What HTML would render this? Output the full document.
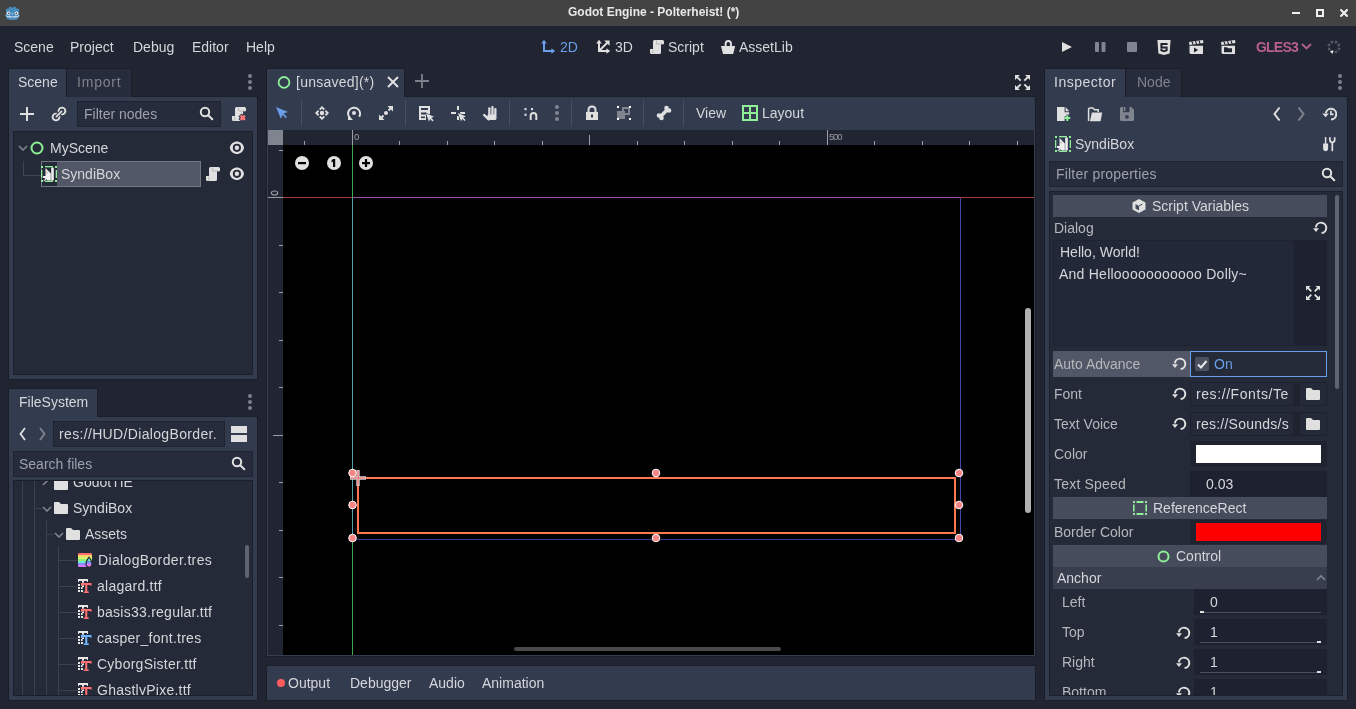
<!DOCTYPE html><html><head><meta charset="utf-8"><style>
html,body{margin:0;padding:0;width:1356px;height:709px;overflow:hidden;background:#202531}
#r{position:relative;width:1356px;height:709px;overflow:hidden}
#r div,#r svg{position:absolute}
.t{font-family:"Liberation Sans",sans-serif;line-height:20px;white-space:pre;will-change:transform}
</style></head><body><div id="r">
<div style="left:0px;top:0px;width:1356px;height:26px;background:#434343;"></div>
<div class="t" style="left:568px;top:2px;font-size:12px;color:#e8e8e8;font-weight:bold;">Godot Engine - Polterheist! (*)</div>
<svg style="left:5px;top:6px;" width="15" height="14" viewBox="0 0 15 14"><path d="M1 4.2 Q0.6 2.9 1.8 2.7 L3.6 2.4 L4.4 0.9 Q5 0.1 5.8 0.8 L7.5 1.8 L9.2 0.8 Q10 0.1 10.6 0.9 L11.4 2.4 L13.2 2.7 Q14.4 2.9 14 4.2 V10.5 Q14 14 7.5 14 Q1 14 1 10.5 Z" fill="#478cbf"/><circle cx="3.6" cy="7.2" r="1.7" fill="#fff"/><circle cx="11.4" cy="7.2" r="1.7" fill="#fff"/><circle cx="3.7" cy="7.3" r="0.9" fill="#414042"/><circle cx="11.3" cy="7.3" r="0.9" fill="#414042"/><circle cx="7.5" cy="7.7" r="0.8" fill="#a8cbe8"/><path d="M0.6 9.4 L3 10.9 L5 10 V11.4 L7.5 10.6 L10 11.4 V10 L12 10.9 L14.4 9.4" stroke="#e8f0f8" stroke-width="0.9" fill="none"/></svg>
<div style="left:1292px;top:12px;width:8px;height:2px;background:#f0f0f0;"></div>
<svg style="left:1316px;top:9px;" width="8" height="8" viewBox="0 0 8 8"><rect x="1" y="1" width="6" height="6" fill="none" stroke="#f0f0f0" stroke-width="2"/></svg>
<svg style="left:1340px;top:9px;" width="8" height="8" viewBox="0 0 8 8"><path d="M1.2 1.2 L6.8 6.8 M6.8 1.2 L1.2 6.8" stroke="#f0f0f0" stroke-width="2.2" stroke-linecap="square"/></svg>
<div style="left:0px;top:26px;width:1356px;height:683px;background:#202531;"></div>
<div class="t" style="left:14px;top:37px;font-size:14px;color:#d5d6d9;font-weight:normal;">Scene</div>
<div class="t" style="left:70px;top:37px;font-size:14px;color:#d5d6d9;font-weight:normal;">Project</div>
<div class="t" style="left:133px;top:37px;font-size:14px;color:#d5d6d9;font-weight:normal;">Debug</div>
<div class="t" style="left:192px;top:37px;font-size:14px;color:#d5d6d9;font-weight:normal;">Editor</div>
<div class="t" style="left:246px;top:37px;font-size:14px;color:#d5d6d9;font-weight:normal;">Help</div>
<div class="t" style="left:560px;top:37px;font-size:14px;color:#6a9ee8;font-weight:normal;">2D</div>
<div class="t" style="left:615px;top:37px;font-size:14px;color:#d5d6d9;font-weight:normal;">3D</div>
<div class="t" style="left:668px;top:37px;font-size:14px;color:#d5d6d9;font-weight:normal;">Script</div>
<div class="t" style="left:739px;top:37px;font-size:14px;color:#d5d6d9;font-weight:normal;">AssetLib</div>
<svg style="left:540px;top:39px;" width="16" height="16" viewBox="0 0 16 16"><path d="M1.2 4.6 L4 0.8 L6.8 4.6 Z M11.4 9.2 L15.2 12 L11.4 14.8 Z" fill="#6a9ee8"/><rect x="3" y="4" width="2" height="9" fill="#6a9ee8"/><rect x="3" y="11" width="9" height="2" fill="#6a9ee8"/></svg>
<svg style="left:595px;top:39px;" width="16" height="16" viewBox="0 0 16 16"><path d="M1.2 4.6 L4 0.8 L6.8 4.6 Z M11.4 9.2 L15.2 12 L11.4 14.8 Z M9.2 1.4 H14.6 V6.8 Z" fill="#e0e0e0"/><rect x="3" y="4" width="2" height="9" fill="#e0e0e0"/><rect x="3" y="11" width="9" height="2" fill="#e0e0e0"/><path d="M4 12 L12.5 3.5" stroke="#e0e0e0" stroke-width="2"/></svg>
<svg style="left:649px;top:39px;" width="16" height="16" viewBox="0 0 16 16"><path d="M5.5 1 H13.5 Q15 1 15 2.5 V5 H12 V13.5 Q12 15 10.5 15 H2.5 Q1 15 1 13.5 V10 H4 V2.5 Q4 1 5.5 1 Z" fill="#e0e0e0"/><path d="M7.6 1.5 V5.1 H14.5 M3.8 10.5 V14.5" stroke="#b4b4b4" stroke-width="0.9" fill="none"/></svg>
<svg style="left:720px;top:39px;" width="16" height="16" viewBox="0 0 16 16"><path d="M5.6 7.5 V5 Q5.6 2 8.3 2 Q11 2 11 5 V7.5" stroke="#e0e0e0" stroke-width="1.9" fill="none"/><path d="M1 7 H15.2 L13.2 15 H3 Z" fill="#e0e0e0"/></svg>
<svg style="left:1062px;top:42px;" width="10" height="10" viewBox="0 0 10 10"><path d="M0 0 L10 5 L0 10 Z" fill="#e0e0e0"/></svg>
<svg style="left:1095px;top:42px;" width="11" height="10" viewBox="0 0 11 10"><rect x="0" y="0" width="4" height="10" rx="1" fill="#808591"/><rect x="6.5" y="0" width="4" height="10" rx="1" fill="#808591"/></svg>
<svg style="left:1127px;top:42px;" width="10" height="10" viewBox="0 0 10 10"><rect x="0" y="0" width="10" height="10" rx="1" fill="#808591"/></svg>
<svg style="left:1157px;top:39px;" width="14" height="17" viewBox="0 0 14 17"><path d="M0.4 1 H13.6 L12.6 14.4 L7 16 L1.4 14.4 Z" fill="#e0e0e0"/><path d="M3.4 4 H10.6 V6 H5.5 V7.4 H10.6 V12 L7 13.2 L3.4 12 V9.8 H5.4 V10.8 L7 11.3 L8.6 10.8 V9.4 H3.4 Z" fill="#202531"/></svg>
<svg style="left:1188px;top:39px;" width="16" height="16" viewBox="0 0 16 16"><path d="M1 3 L15 1 L15.4 4 L1.4 6 Z" fill="#e0e0e0"/><path d="M4 2.6 L5 5.6 M7.5 2.1 L8.5 5.1 M11 1.6 L12 4.6" stroke="#202531" stroke-width="1.2"/><path d="M1.5 6.8 H15 V15 H2.5 L1.5 14 Z" fill="#e0e0e0"/><path d="M6 8.5 L10.2 11 L6 13.5 Z" fill="#202531"/></svg>
<svg style="left:1220px;top:39px;" width="16" height="16" viewBox="0 0 16 16"><path d="M1 3 L15 1 L15.4 4 L1.4 6 Z" fill="#e0e0e0"/><path d="M4 2.6 L5 5.6 M7.5 2.1 L8.5 5.1 M11 1.6 L12 4.6" stroke="#202531" stroke-width="1.2"/><path d="M1.5 6.8 H15 V15 H2.5 L1.5 14 Z" fill="#e0e0e0"/><path d="M4 8.3 H7 L8 9.3 H12 V13.3 H4 Z" fill="#202531"/></svg>
<div class="t" style="left:1256px;top:37px;font-size:14px;color:#b95f8c;font-weight:bold;letter-spacing:-0.8px">GLES3</div>
<svg style="left:1301px;top:43px;" width="11" height="7" viewBox="0 0 11 7"><path d="M1 1 L5.5 5.5 L10 1" stroke="#b5608c" stroke-width="1.8" fill="none"/></svg>
<svg style="left:1326px;top:39px;" width="16" height="16" viewBox="0 0 16 16"><polygon points="12.06,3.95 8.28,4.44 9.74,0.92" fill="#575c69"/><polygon points="13.74,8.00 10.72,5.68 14.24,4.23" fill="#575c69"/><polygon points="12.05,12.06 11.56,8.28 15.08,9.74" fill="#575c69"/><polygon points="8.00,13.74 10.32,10.72 11.77,14.24" fill="#575c69"/><polygon points="3.94,12.05 7.72,11.56 6.26,15.08" fill="#f0f0f0"/><polygon points="2.26,8.00 5.28,10.32 1.76,11.77" fill="#575c69"/><polygon points="3.95,3.94 4.44,7.72 0.92,6.26" fill="#575c69"/><polygon points="8.00,2.26 5.68,5.28 4.23,1.76" fill="#575c69"/></svg>
<div style="left:8px;top:68px;width:124px;height:29px;background:#1b1e28;"></div>
<div style="left:8px;top:96px;width:250px;height:284px;background:#1b1e28;"></div>
<div style="left:9px;top:97px;width:248px;height:282px;background:#333b4f;"></div>
<div style="left:9px;top:69px;width:57px;height:28px;background:#333b4f;"></div>
<div style="left:67px;top:69px;width:64px;height:28px;background:#262c3b;"></div>
<div class="t" style="left:18px;top:72px;font-size:14px;color:#d5d6d9;font-weight:normal;">Scene</div>
<div class="t" style="left:77px;top:72px;font-size:14px;color:#7f828b;font-weight:normal;letter-spacing:0.8px">Import</div>
<svg style="left:248px;top:73px;" width="4" height="18" viewBox="0 0 4 18"><circle cx="2" cy="3" r="2" fill="#7b8090"/><circle cx="2" cy="9" r="2" fill="#7b8090"/><circle cx="2" cy="15" r="2" fill="#7b8090"/></svg>
<svg style="left:20px;top:107px;" width="14" height="14" viewBox="0 0 14 14"><path d="M7 0 V14 M0 7 H14" stroke="#e0e0e0" stroke-width="2"/></svg>
<svg style="left:51px;top:106px;" width="16" height="16" viewBox="0 0 16 16"><circle cx="11" cy="5" r="3.4" stroke="#e0e0e0" stroke-width="1.9" fill="none"/><circle cx="5" cy="11" r="3.4" stroke="#e0e0e0" stroke-width="1.9" fill="none"/><path d="M5.2 10.8 L10.8 5.2" stroke="#333b4f" stroke-width="3.6"/><path d="M5.4 10.6 L10.6 5.4" stroke="#e0e0e0" stroke-width="1.7" stroke-linecap="round"/></svg>
<div style="left:77px;top:101px;width:144px;height:26px;background:#262c3b;box-shadow: inset 0 0 0 1px #1f2431"></div>
<div class="t" style="left:84px;top:104px;font-size:14px;color:#9da1ab;font-weight:normal;">Filter nodes</div>
<svg style="left:199px;top:106px;" width="16" height="16" viewBox="0 0 16 16"><circle cx="6" cy="6" r="4.2" stroke="#e0e0e0" stroke-width="2" fill="none"/><path d="M9.2 9.2 L13.3 13.3" stroke="#e0e0e0" stroke-width="2" stroke-linecap="round"/></svg>
<svg style="left:231px;top:106px;" width="16" height="16" viewBox="0 0 16 16"><path d="M5.5 1 H13.5 Q15 1 15 2.5 V5 H12 V13.5 Q12 15 10.5 15 H2.5 Q1 15 1 13.5 V10 H4 V2.5 Q4 1 5.5 1 Z" fill="#e0e0e0"/><path d="M7.6 1.5 V5.1 H14.5 M3.8 10.5 V14.5" stroke="#b4b4b4" stroke-width="0.9" fill="none"/><path d="M9 9 L14.5 14.5 M14.5 9 L9 14.5" stroke="#333b4f" stroke-width="4.5"/><path d="M9.6 9.6 L13.9 13.9 M13.9 9.6 L9.6 13.9" stroke="#ff7a7a" stroke-width="2.2"/></svg>
<div style="left:13px;top:131px;width:240px;height:244px;background:#252a39;box-shadow: inset 0 0 0 1px #1c202b"></div>
<svg style="left:18px;top:145px;" width="10" height="6" viewBox="0 0 10 6"><path d="M1 1 L5 5 L9 1" stroke="#80848f" stroke-width="1.6" fill="none"/></svg>
<svg style="left:30px;top:141px;" width="14" height="14" viewBox="0 0 14 14"><circle cx="7" cy="7" r="5.5" stroke="#8eef97" stroke-width="2" fill="none"/></svg>
<div class="t" style="left:50px;top:138px;font-size:14px;color:#d5d6d9;font-weight:normal;">MyScene</div>
<div style="left:23px;top:161px;width:1px;height:15px;background:#3f4555;"></div>
<div style="left:23px;top:175px;width:18px;height:1px;background:#3f4555;"></div>
<div style="left:41px;top:161px;width:160px;height:26px;background:#515766;box-shadow: inset 0 0 0 1px #727784"></div>
<div style="left:42px;top:162px;width:15px;height:24px;background:#252a39;"></div>
<svg style="left:40px;top:165px;" width="18" height="18" viewBox="0 0 18 18"><rect x="1" y="1" width="2" height="2" fill="#8eef97"/><rect x="15" y="1" width="2" height="2" fill="#8eef97"/><rect x="1" y="15" width="2" height="2" fill="#8eef97"/><rect x="15" y="15" width="2" height="2" fill="#8eef97"/><rect x="5" y="1" width="8" height="1.3" fill="#8eef97"/><rect x="5" y="15.7" width="8" height="1.3" fill="#8eef97"/><rect x="1" y="5" width="1.3" height="8" fill="#8eef97"/><rect x="15.7" y="5" width="1.3" height="8" fill="#8eef97"/><path d="M11.2 2.5 H13.8 V15.5 H11.2 Z" fill="#f0f0f0"/><path d="M5.5 3 L10.8 8.5 V15.5 H7.5 L6.5 14.2 L4.2 16.2 L3.5 15.5 L5.6 13.5 L3 12.8 V11 H5.5 Z" fill="#f0f0f0"/><path d="M6.5 6 L8.2 8 L6.5 9 Z" fill="#b8b8b8"/></svg>
<div class="t" style="left:61px;top:164px;font-size:14px;color:#d5d6d9;font-weight:normal;">SyndiBox</div>
<svg style="left:205px;top:166px;" width="16" height="16" viewBox="0 0 16 16"><path d="M5.5 1 H13.5 Q15 1 15 2.5 V5 H12 V13.5 Q12 15 10.5 15 H2.5 Q1 15 1 13.5 V10 H4 V2.5 Q4 1 5.5 1 Z" fill="#e0e0e0"/><path d="M7.6 1.5 V5.1 H14.5 M3.8 10.5 V14.5" stroke="#b4b4b4" stroke-width="0.9" fill="none"/></svg>
<svg style="left:229px;top:141px;" width="16" height="14" viewBox="0 0 16 14"><path d="M0.8 6.8 C2.2 -1.5 13.6 -1.5 15 6.8 C13.6 15.1 2.2 15.1 0.8 6.8 Z" fill="#e0e0e0"/><circle cx="7.9" cy="6.8" r="4.1" fill="#252a39"/><circle cx="7.9" cy="6.8" r="2.2" fill="#e0e0e0"/></svg>
<svg style="left:229px;top:167px;" width="16" height="14" viewBox="0 0 16 14"><path d="M0.8 6.8 C2.2 -1.5 13.6 -1.5 15 6.8 C13.6 15.1 2.2 15.1 0.8 6.8 Z" fill="#e0e0e0"/><circle cx="7.9" cy="6.8" r="4.1" fill="#252a39"/><circle cx="7.9" cy="6.8" r="2.2" fill="#e0e0e0"/></svg>
<div style="left:8px;top:388px;width:90px;height:29px;background:#1b1e28;"></div>
<div style="left:8px;top:416px;width:250px;height:285px;background:#1b1e28;"></div>
<div style="left:9px;top:417px;width:248px;height:283px;background:#333b4f;"></div>
<div style="left:9px;top:389px;width:88px;height:28px;background:#333b4f;"></div>
<div class="t" style="left:19px;top:392px;font-size:14px;color:#d5d6d9;font-weight:normal;">FileSystem</div>
<svg style="left:248px;top:393px;" width="4" height="18" viewBox="0 0 4 18"><circle cx="2" cy="3" r="2" fill="#7b8090"/><circle cx="2" cy="9" r="2" fill="#7b8090"/><circle cx="2" cy="15" r="2" fill="#7b8090"/></svg>
<svg style="left:19px;top:427px;" width="7" height="14" viewBox="0 0 7 14"><path d="M6 1 L1.5 7 L6 13" stroke="#e0e0e0" stroke-width="1.8" fill="none"/></svg>
<svg style="left:39px;top:427px;" width="7" height="14" viewBox="0 0 7 14"><path d="M1 1 L5.5 7 L1 13" stroke="#80848f" stroke-width="1.8" fill="none"/></svg>
<div style="left:53px;top:421px;width:172px;height:26px;background:#262c3b;box-shadow: inset 0 0 0 1px #1f2431"></div>
<div class="t" style="left:59px;top:424px;font-size:14px;color:#d5d6d9;font-weight:normal;letter-spacing:0.34px">res://HUD/DialogBorder.</div>
<div style="left:231px;top:426px;width:16px;height:7px;background:#e0e0e0;"></div>
<div style="left:231px;top:435px;width:16px;height:7px;background:#e0e0e0;"></div>
<div style="left:13px;top:451px;width:240px;height:26px;background:#262c3b;box-shadow: inset 0 0 0 1px #1f2431"></div>
<div class="t" style="left:19px;top:454px;font-size:14px;color:#9da1ab;font-weight:normal;">Search files</div>
<svg style="left:231px;top:456px;" width="16" height="16" viewBox="0 0 16 16"><circle cx="6" cy="6" r="4.2" stroke="#e0e0e0" stroke-width="2" fill="none"/><path d="M9.2 9.2 L13.3 13.3" stroke="#e0e0e0" stroke-width="2" stroke-linecap="round"/></svg>
<div style="left:13px;top:480px;width:240px;height:216px;background:#252a39;box-shadow: inset 0 0 0 1px #1c202b"></div>
<div style="left:14px;top:481px;width:238px;height:214px;overflow:hidden">
<div style="left:8px;top:0px;width:1px;height:214px;background:#3a4050;"></div>
<div style="left:20px;top:0px;width:1px;height:214px;background:#3a4050;"></div>
<div style="left:32px;top:39px;width:1px;height:175px;background:#3a4050;"></div>
<div style="left:44px;top:65px;width:1px;height:149px;background:#3a4050;"></div>
<div style="left:20px;top:27px;width:8px;height:1px;background:#3a4050;"></div>
<div style="left:32px;top:53px;width:8px;height:1px;background:#3a4050;"></div>
<div style="left:44px;top:79px;width:20px;height:1px;background:#3a4050;"></div>
<div style="left:44px;top:105px;width:20px;height:1px;background:#3a4050;"></div>
<div style="left:44px;top:131px;width:20px;height:1px;background:#3a4050;"></div>
<div style="left:44px;top:157px;width:20px;height:1px;background:#3a4050;"></div>
<div style="left:44px;top:183px;width:20px;height:1px;background:#3a4050;"></div>
<div style="left:44px;top:209px;width:20px;height:1px;background:#3a4050;"></div>
<svg style="left:40px;top:-3px;" width="14" height="12" viewBox="0 0 14 12"><path d="M0 1 Q0 0 1 0 H5 L7 2 H13 Q14 2 14 3 V11 Q14 12 13 12 H1 Q0 12 0 11 Z" fill="#e0e0e0"/></svg>
<svg style="left:28px;top:-3px;" width="8" height="8" viewBox="0 0 8 8"><path d="M1 7 L6 2" stroke="#80848f" stroke-width="1.6"/></svg>
<div class="t" style="left:59px;top:-9px;font-size:14px;color:#d5d6d9;font-weight:normal;">GodotTIE</div>
<svg style="left:40px;top:21px;" width="14" height="12" viewBox="0 0 14 12"><path d="M0 1 Q0 0 1 0 H5 L7 2 H13 Q14 2 14 3 V11 Q14 12 13 12 H1 Q0 12 0 11 Z" fill="#e0e0e0"/></svg>
<svg style="left:28px;top:25px;" width="10" height="6" viewBox="0 0 10 6"><path d="M1 1 L5 5 L9 1" stroke="#80848f" stroke-width="1.6" fill="none"/></svg>
<div class="t" style="left:59px;top:17px;font-size:14px;color:#d5d6d9;font-weight:normal;">SyndiBox</div>
<svg style="left:52px;top:47px;" width="14" height="12" viewBox="0 0 14 12"><path d="M0 1 Q0 0 1 0 H5 L7 2 H13 Q14 2 14 3 V11 Q14 12 13 12 H1 Q0 12 0 11 Z" fill="#e0e0e0"/></svg>
<svg style="left:40px;top:51px;" width="10" height="6" viewBox="0 0 10 6"><path d="M1 1 L5 5 L9 1" stroke="#80848f" stroke-width="1.6" fill="none"/></svg>
<div class="t" style="left:71px;top:43px;font-size:14px;color:#d5d6d9;font-weight:normal;">Assets</div>
<svg style="left:64px;top:72px;" width="14" height="14" viewBox="0 0 14 14"><clipPath id="rc"><rect x="0" y="0" width="14" height="14" rx="1.2"/></clipPath><g clip-path="url(#rc)"><rect x="0" y="0" width="14" height="2" fill="#ff6e6e"/><rect x="0" y="2" width="14" height="2" fill="#ffd36e"/><rect x="0" y="4" width="14" height="2" fill="#d4f56e"/><rect x="0" y="6" width="14" height="2" fill="#8ef06e"/><rect x="0" y="8" width="14" height="2" fill="#6ee8d0"/><rect x="0" y="10" width="14" height="2" fill="#8a8cff"/><rect x="0" y="12" width="14" height="2" fill="#d67aff"/></g><path d="M11 3.2 Q14.6 8 14.6 10.4 Q14.6 14.6 11 14.6 Q7.4 14.6 7.4 10.4 Q7.4 8 11 3.2 Z" fill="#202531"/><clipPath id="dc"><path d="M11 5 Q13.4 8.6 13.4 10.5 Q13.4 13.4 11 13.4 Q8.6 13.4 8.6 10.5 Q8.6 8.6 11 5 Z"/></clipPath><g clip-path="url(#dc)"><rect x="8" y="4" width="6" height="4.5" fill="#6ee8d0"/><rect x="8" y="8.5" width="6" height="2.5" fill="#8a8cff"/><rect x="8" y="11" width="6" height="2.5" fill="#d67aff"/><rect x="8" y="12.3" width="6" height="2" fill="#ff78b8"/></g></svg>
<div class="t" style="left:84px;top:69px;font-size:14px;color:#d5d6d9;font-weight:normal;letter-spacing:0.35px">DialogBorder.tres</div>
<svg style="left:64px;top:98px;" width="14" height="14" viewBox="0 0 14 14"><path d="M0 0 H10 V3 H9 V2 H6 V8 H4 V2 H1 V3 H0 Z" fill="#e8e8e8"/><rect x="0" y="5" width="2" height="2" fill="#e8e8e8"/><rect x="0" y="8" width="2" height="2" fill="#e8e8e8"/><rect x="0" y="11" width="2" height="2" fill="#e8e8e8"/><rect x="3" y="8" width="1.6" height="2" fill="#e8e8e8"/><rect x="3" y="11" width="2" height="2" fill="#e8e8e8"/><path d="M3 4 H13.5 V7 H12.5 V6 H9.3 V12.6 H10.8 V14 H5.7 V12.6 H7.2 V6 H4 V7 H3 Z" fill="#ff7070" stroke="#202531" stroke-width="0.6" paint-order="stroke"/></svg>
<div class="t" style="left:83px;top:95px;font-size:14px;color:#d5d6d9;font-weight:normal;letter-spacing:0.25px">alagard.ttf</div>
<svg style="left:64px;top:124px;" width="14" height="14" viewBox="0 0 14 14"><path d="M0 0 H10 V3 H9 V2 H6 V8 H4 V2 H1 V3 H0 Z" fill="#e8e8e8"/><rect x="0" y="5" width="2" height="2" fill="#e8e8e8"/><rect x="0" y="8" width="2" height="2" fill="#e8e8e8"/><rect x="0" y="11" width="2" height="2" fill="#e8e8e8"/><rect x="3" y="8" width="1.6" height="2" fill="#e8e8e8"/><rect x="3" y="11" width="2" height="2" fill="#e8e8e8"/><path d="M3 4 H13.5 V7 H12.5 V6 H9.3 V12.6 H10.8 V14 H5.7 V12.6 H7.2 V6 H4 V7 H3 Z" fill="#ff7070" stroke="#202531" stroke-width="0.6" paint-order="stroke"/></svg>
<div class="t" style="left:83px;top:121px;font-size:14px;color:#d5d6d9;font-weight:normal;letter-spacing:0.25px">basis33.regular.ttf</div>
<svg style="left:64px;top:150px;" width="14" height="14" viewBox="0 0 14 14"><path d="M0 0 H10 V3 H9 V2 H6 V8 H4 V2 H1 V3 H0 Z" fill="#e8e8e8"/><rect x="0" y="5" width="2" height="2" fill="#e8e8e8"/><rect x="0" y="8" width="2" height="2" fill="#e8e8e8"/><rect x="0" y="11" width="2" height="2" fill="#e8e8e8"/><rect x="3" y="8" width="1.6" height="2" fill="#e8e8e8"/><rect x="3" y="11" width="2" height="2" fill="#e8e8e8"/><path d="M3 4 H13.5 V7 H12.5 V6 H9.3 V12.6 H10.8 V14 H5.7 V12.6 H7.2 V6 H4 V7 H3 Z" fill="#6fb6ff" stroke="#202531" stroke-width="0.6" paint-order="stroke"/></svg>
<div class="t" style="left:83px;top:147px;font-size:14px;color:#d5d6d9;font-weight:normal;letter-spacing:0.25px">casper_font.tres</div>
<svg style="left:64px;top:176px;" width="14" height="14" viewBox="0 0 14 14"><path d="M0 0 H10 V3 H9 V2 H6 V8 H4 V2 H1 V3 H0 Z" fill="#e8e8e8"/><rect x="0" y="5" width="2" height="2" fill="#e8e8e8"/><rect x="0" y="8" width="2" height="2" fill="#e8e8e8"/><rect x="0" y="11" width="2" height="2" fill="#e8e8e8"/><rect x="3" y="8" width="1.6" height="2" fill="#e8e8e8"/><rect x="3" y="11" width="2" height="2" fill="#e8e8e8"/><path d="M3 4 H13.5 V7 H12.5 V6 H9.3 V12.6 H10.8 V14 H5.7 V12.6 H7.2 V6 H4 V7 H3 Z" fill="#ff7070" stroke="#202531" stroke-width="0.6" paint-order="stroke"/></svg>
<div class="t" style="left:83px;top:173px;font-size:14px;color:#d5d6d9;font-weight:normal;letter-spacing:0.25px">CyborgSister.ttf</div>
<svg style="left:64px;top:202px;" width="14" height="14" viewBox="0 0 14 14"><path d="M0 0 H10 V3 H9 V2 H6 V8 H4 V2 H1 V3 H0 Z" fill="#e8e8e8"/><rect x="0" y="5" width="2" height="2" fill="#e8e8e8"/><rect x="0" y="8" width="2" height="2" fill="#e8e8e8"/><rect x="0" y="11" width="2" height="2" fill="#e8e8e8"/><rect x="3" y="8" width="1.6" height="2" fill="#e8e8e8"/><rect x="3" y="11" width="2" height="2" fill="#e8e8e8"/><path d="M3 4 H13.5 V7 H12.5 V6 H9.3 V12.6 H10.8 V14 H5.7 V12.6 H7.2 V6 H4 V7 H3 Z" fill="#ff7070" stroke="#202531" stroke-width="0.6" paint-order="stroke"/></svg>
<div class="t" style="left:83px;top:199px;font-size:14px;color:#d5d6d9;font-weight:normal;letter-spacing:0.25px">GhastlyPixe.ttf</div>
</div>
<div style="left:245px;top:545px;width:4px;height:33px;background:#5f6472;border-radius:2px"></div>
<div style="left:266px;top:68px;width:139px;height:29px;background:#1b1e28;"></div>
<div style="left:266px;top:96px;width:770px;height:561px;background:#1b1e28;"></div>
<div style="left:267px;top:69px;width:137px;height:28px;background:#333b4f;"></div>
<svg style="left:277px;top:75px;" width="14" height="14" viewBox="0 0 14 14"><circle cx="7" cy="7.4" r="5.4" stroke="#8eef97" stroke-width="1.8" fill="none"/></svg>
<div class="t" style="left:296px;top:72px;font-size:14px;color:#d5d6d9;font-weight:normal;letter-spacing:0.25px">[unsaved](*)</div>
<svg style="left:387px;top:76px;" width="12" height="12" viewBox="0 0 12 12"><path d="M1 1 L11 11 M11 1 L1 11" stroke="#e0e0e0" stroke-width="2"/></svg>
<svg style="left:415px;top:74px;" width="14" height="14" viewBox="0 0 14 14"><path d="M7 0 V14 M0 7 H14" stroke="#7d808a" stroke-width="1.8"/></svg>
<svg style="left:1014.5px;top:74.5px;" width="15" height="15" viewBox="0 0 14 14"><path d="M0 0 H4.6 L0 4.6 Z M14 0 V4.6 L9.4 0 Z M0 14 V9.4 L4.6 14 Z M14 14 H9.4 L14 9.4 Z" fill="#e0e0e0"/><path d="M1.5 1.5 L5.3 5.3 M12.5 1.5 L8.7 5.3 M1.5 12.5 L5.3 8.7 M12.5 12.5 L8.7 8.7" stroke="#e0e0e0" stroke-width="1.8"/></svg>
<div style="left:267px;top:97px;width:768px;height:33px;background:#333b4f;"></div>
<div style="left:301px;top:100px;width:1px;height:26px;background:#474e62;"></div>
<div style="left:405px;top:100px;width:1px;height:26px;background:#474e62;"></div>
<div style="left:509px;top:100px;width:1px;height:26px;background:#474e62;"></div>
<div style="left:571px;top:100px;width:1px;height:26px;background:#474e62;"></div>
<div style="left:643px;top:100px;width:1px;height:26px;background:#474e62;"></div>
<div style="left:683px;top:100px;width:1px;height:26px;background:#474e62;"></div>
<div class="t" style="left:696px;top:103px;font-size:14px;color:#d5d6d9;font-weight:normal;">View</div>
<div class="t" style="left:762px;top:103px;font-size:14px;color:#d5d6d9;font-weight:normal;">Layout</div>
<div style="left:267px;top:130px;width:768px;height:526px;background:#353d50;"></div>
<div style="left:268px;top:130px;width:766px;height:525px;background:#202531;"></div>
<div style="left:268px;top:130px;width:15px;height:15px;background:#80848f;"></div>
<div style="left:283px;top:145px;width:751px;height:510px;background:#000;"></div>
<div style="left:266px;top:665px;width:770px;height:36px;background:#1b1e28;"></div>
<div style="left:267px;top:666px;width:768px;height:34px;background:#333b4f;"></div>
<svg style="left:277px;top:679px;" width="8" height="8" viewBox="0 0 8 8"><circle cx="4" cy="4" r="4" fill="#ff5d5d"/></svg>
<div class="t" style="left:288px;top:673px;font-size:14px;color:#d5d6d9;font-weight:normal;">Output</div>
<div class="t" style="left:350px;top:673px;font-size:14px;color:#d5d6d9;font-weight:normal;">Debugger</div>
<div class="t" style="left:429px;top:673px;font-size:14px;color:#d5d6d9;font-weight:normal;">Audio</div>
<div class="t" style="left:482px;top:673px;font-size:14px;color:#d5d6d9;font-weight:normal;">Animation</div>
<div style="left:1044px;top:68px;width:138px;height:29px;background:#1b1e28;"></div>
<div style="left:1044px;top:96px;width:304px;height:605px;background:#1b1e28;"></div>
<div style="left:1045px;top:97px;width:302px;height:603px;background:#333b4f;"></div>
<div style="left:1045px;top:69px;width:80px;height:28px;background:#333b4f;"></div>
<div style="left:1126px;top:69px;width:55px;height:28px;background:#262c3b;"></div>
<div class="t" style="left:1054px;top:72px;font-size:14px;color:#d5d6d9;font-weight:normal;letter-spacing:0.5px">Inspector</div>
<div class="t" style="left:1137px;top:72px;font-size:14px;color:#7f828b;font-weight:normal;">Node</div>
<svg style="left:1338px;top:73px;" width="4" height="18" viewBox="0 0 4 18"><circle cx="2" cy="3" r="2" fill="#7b8090"/><circle cx="2" cy="9" r="2" fill="#7b8090"/><circle cx="2" cy="15" r="2" fill="#7b8090"/></svg>
<div class="t" style="left:1075px;top:134px;font-size:14px;color:#d5d6d9;font-weight:normal;">SyndiBox</div>
<div style="left:1049px;top:161px;width:294px;height:26px;background:#262c3b;box-shadow: inset 0 0 0 1px #1f2431"></div>
<div class="t" style="left:1056px;top:164px;font-size:14px;color:#9da1ab;font-weight:normal;letter-spacing:0.2px">Filter properties</div>
<div style="left:1049px;top:191px;width:294px;height:505px;background:#252a39;box-shadow: inset 0 0 0 1px #1c202b"></div>
<svg style="left:274px;top:105px;" width="16" height="16" viewBox="0 0 16 16"><path d="M2 2 L14 7 L9.5 8.5 L13 12 L11.8 13.2 L8.3 9.7 L7 14 Z" fill="#6a9ee8"/></svg>
<svg style="left:314px;top:105px;" width="16" height="16" viewBox="0 0 16 16"><circle cx="8" cy="8" r="2.2" fill="#e0e0e0"/><path d="M8 1 L11 4 L9.6 5.2 L8 3.6 L6.4 5.2 L5 4 Z M8 15 L5 12 L6.4 10.8 L8 12.4 L9.6 10.8 L11 12 Z M1 8 L4 5 L5.2 6.4 L3.6 8 L5.2 9.6 L4 11 Z M15 8 L12 11 L10.8 9.6 L12.4 8 L10.8 6.4 L12 5 Z" fill="#e0e0e0"/></svg>
<svg style="left:346px;top:105px;" width="16" height="16" viewBox="0 0 16 16"><circle cx="8" cy="8" r="2" fill="#e0e0e0"/><path d="M4.2 13.2 A6 6 0 1 1 13.2 11.8" stroke="#e0e0e0" stroke-width="2" fill="none"/><path d="M2 10 L7 15 L2 15 Z" fill="#e0e0e0"/></svg>
<svg style="left:378px;top:105px;" width="16" height="16" viewBox="0 0 16 16"><circle cx="8" cy="8" r="2" fill="#e0e0e0"/><path d="M1 15 V9.5 L6.5 15 Z M15 1 V6.5 L9.5 1 Z" fill="#e0e0e0"/><path d="M3 13 L5.5 10.5 M13 3 L10.5 5.5" stroke="#e0e0e0" stroke-width="2"/></svg>
<svg style="left:418px;top:105px;" width="17" height="17" viewBox="0 0 17 17"><path d="M1 1 H12 V9 H8 V15 H1 Z" fill="#e0e0e0"/><rect x="3" y="3" width="7" height="2" fill="#333b4f"/><rect x="3" y="7.5" width="5" height="2" fill="#333b4f"/><rect x="3" y="11.5" width="4" height="1.6" fill="#333b4f"/><path d="M8 8.3 L16 11.8 L13.2 12.9 L15.6 15.3 L14.5 16.4 L12.1 14.0 L11 16.8 Z" fill="#e0e0e0" stroke="#333b4f" stroke-width="1.1" paint-order="stroke"/></svg>
<svg style="left:450px;top:105px;" width="17" height="17" viewBox="0 0 17 17"><rect x="7" y="1" width="2" height="4" fill="#e0e0e0"/><rect x="1" y="7" width="5" height="2" fill="#e0e0e0"/><rect x="10" y="7" width="5" height="2" fill="#e0e0e0"/><rect x="7" y="11" width="2" height="4" fill="#e0e0e0"/><path d="M8 8 L16 11.5 L13.2 12.6 L15.6 15 L14.5 16.1 L12.1 13.7 L11 16.5 Z" fill="#e0e0e0" stroke="#333b4f" stroke-width="1.1" paint-order="stroke"/></svg>
<svg style="left:482px;top:105px;" width="16" height="16" viewBox="0 0 16 16"><rect x="6.2" y="2.2" width="2.3" height="9" rx="1.1" fill="#e0e0e0"/><rect x="9.3" y="1" width="2.3" height="10" rx="1.1" fill="#e0e0e0"/><rect x="12.2" y="3" width="2.3" height="8" rx="1.1" fill="#e0e0e0"/><rect x="5.2" y="9.5" width="9.3" height="5.5" rx="1.6" fill="#e0e0e0"/><path d="M2.2 10 L6.6 14.3" stroke="#e0e0e0" stroke-width="2.4" stroke-linecap="round"/></svg>
<svg style="left:523px;top:105px;" width="16" height="16" viewBox="0 0 16 16"><rect x="1.5" y="3" width="2" height="2.2" fill="#e0e0e0"/><rect x="8" y="3" width="2" height="2.2" fill="#e0e0e0"/><rect x="1.5" y="8.7" width="2" height="2.2" fill="#e0e0e0"/><path d="M6.7 15 V10.7 Q6.7 6.9 10.5 6.9 Q14.3 6.9 14.3 10.7 V15 H12.3 V10.7 Q12.3 8.9 10.5 8.9 Q8.7 8.9 8.7 10.7 V15 Z" fill="#e0e0e0"/></svg>
<svg style="left:553px;top:104px;" width="8" height="18" viewBox="0 0 8 18"><circle cx="4" cy="3" r="2" fill="#80848f"/><circle cx="4" cy="9" r="2" fill="#80848f"/><circle cx="4" cy="15" r="2" fill="#80848f"/></svg>
<svg style="left:584px;top:105px;" width="16" height="16" viewBox="0 0 16 16"><path d="M4.5 7 V5 Q4.5 1.5 8 1.5 Q11.5 1.5 11.5 5 V7" stroke="#e0e0e0" stroke-width="2" fill="none"/><rect x="2" y="7" width="12" height="8" fill="#e0e0e0"/><rect x="7" y="9.5" width="2" height="3" fill="#333b4f"/></svg>
<svg style="left:616px;top:106px;" width="16" height="16" viewBox="0 0 16 16"><rect x="1" y="5" width="8" height="8" fill="#80848f"/><path d="M6 1 H14 V9 H9 V7 H12 V3 H8 V5 H6 Z" fill="#80848f"/><rect x="1" y="0" width="2" height="2" fill="#fff"/><rect x="13" y="0" width="2" height="2" fill="#fff"/><rect x="1" y="12" width="2" height="2" fill="#fff"/><rect x="13" y="12" width="2" height="2" fill="#fff"/></svg>
<svg style="left:656px;top:105px;" width="16" height="16" viewBox="0 0 16 16"><path d="M4.5 11.5 L11.5 4.5" stroke="#e0e0e0" stroke-width="3.5"/><circle cx="3" cy="10.5" r="2.3" fill="#e0e0e0"/><circle cx="5.5" cy="13" r="2.3" fill="#e0e0e0"/><circle cx="10.5" cy="3" r="2.3" fill="#e0e0e0"/><circle cx="13" cy="5.5" r="2.3" fill="#e0e0e0"/></svg>
<svg style="left:742px;top:105px;" width="16" height="16" viewBox="0 0 16 16"><rect x="1" y="1" width="14" height="14" fill="none" stroke="#8eef97" stroke-width="2"/><path d="M8 1 V15 M1 8 H15" stroke="#8eef97" stroke-width="2"/></svg>
<div style="left:304px;top:141px;width:1px;height:4px;background:#9a9ea8;"></div>
<div style="left:352px;top:130px;width:1px;height:15px;background:#9a9ea8;"></div>
<div style="left:399px;top:141px;width:1px;height:4px;background:#9a9ea8;"></div>
<div style="left:447px;top:141px;width:1px;height:4px;background:#9a9ea8;"></div>
<div style="left:494px;top:141px;width:1px;height:4px;background:#9a9ea8;"></div>
<div style="left:542px;top:141px;width:1px;height:4px;background:#9a9ea8;"></div>
<div style="left:589px;top:135px;width:1px;height:10px;background:#9a9ea8;"></div>
<div style="left:637px;top:141px;width:1px;height:4px;background:#9a9ea8;"></div>
<div style="left:684px;top:141px;width:1px;height:4px;background:#9a9ea8;"></div>
<div style="left:732px;top:141px;width:1px;height:4px;background:#9a9ea8;"></div>
<div style="left:779px;top:141px;width:1px;height:4px;background:#9a9ea8;"></div>
<div style="left:827px;top:130px;width:1px;height:15px;background:#9a9ea8;"></div>
<div style="left:874px;top:141px;width:1px;height:4px;background:#9a9ea8;"></div>
<div style="left:922px;top:141px;width:1px;height:4px;background:#9a9ea8;"></div>
<div style="left:969px;top:141px;width:1px;height:4px;background:#9a9ea8;"></div>
<div style="left:1017px;top:141px;width:1px;height:4px;background:#9a9ea8;"></div>
<div class="t" style="left:354px;top:127px;font-size:9.5px;color:#9a9ea8;font-weight:normal;letter-spacing:-1.2px">0</div>
<div class="t" style="left:829px;top:127px;font-size:9.5px;color:#9a9ea8;font-weight:normal;letter-spacing:-1.2px">500</div>
<div style="left:279px;top:150px;width:4px;height:1px;background:#9a9ea8;"></div>
<div style="left:268px;top:197px;width:15px;height:1px;background:#9a9ea8;"></div>
<div style="left:279px;top:245px;width:4px;height:1px;background:#9a9ea8;"></div>
<div style="left:279px;top:292px;width:4px;height:1px;background:#9a9ea8;"></div>
<div style="left:279px;top:340px;width:4px;height:1px;background:#9a9ea8;"></div>
<div style="left:279px;top:387px;width:4px;height:1px;background:#9a9ea8;"></div>
<div style="left:273px;top:435px;width:10px;height:1px;background:#9a9ea8;"></div>
<div style="left:279px;top:482px;width:4px;height:1px;background:#9a9ea8;"></div>
<div style="left:279px;top:530px;width:4px;height:1px;background:#9a9ea8;"></div>
<div style="left:279px;top:577px;width:4px;height:1px;background:#9a9ea8;"></div>
<div style="left:279px;top:625px;width:4px;height:1px;background:#9a9ea8;"></div>
<svg style="left:270px;top:190px;" width="9" height="6" viewBox="0 0 9 6"><ellipse cx="4.5" cy="3" rx="3.2" ry="2" fill="none" stroke="#9a9ea8" stroke-width="1.1"/></svg>
<div style="left:283px;top:197px;width:751px;height:1px;background:#a33c3c;"></div>
<div style="left:352px;top:197px;width:608px;height:1px;background:#9a50a8;"></div>
<div style="left:352px;top:145px;width:1px;height:510px;background:#3ea84a;"></div>
<div style="left:352px;top:198px;width:1px;height:341px;background:#5aa0aa;"></div>
<div style="left:960px;top:198px;width:1px;height:341px;background:#4646a8;"></div>
<div style="left:353px;top:539px;width:607px;height:1px;background:#3a3a96;"></div>
<svg style="left:294px;top:155px;" width="16" height="16" viewBox="0 0 16 16"><circle cx="8" cy="8" r="7" fill="#e0e0e0"/><rect x="4" y="7" width="8" height="2.2" fill="#000"/></svg>
<svg style="left:326px;top:155px;" width="16" height="16" viewBox="0 0 16 16"><circle cx="8" cy="8" r="7" fill="#e0e0e0"/><path d="M7 4 H9.2 V12 H7 V6.5 L5.5 7.5 V5.5 Z" fill="#000"/></svg>
<svg style="left:358px;top:155px;" width="16" height="16" viewBox="0 0 16 16"><circle cx="8" cy="8" r="7" fill="#e0e0e0"/><rect x="4" y="7" width="8" height="2.2" fill="#000"/><rect x="6.9" y="4" width="2.2" height="8" fill="#000"/></svg>
<svg style="left:350px;top:470px;" width="612" height="72" viewBox="0 0 612 72"><rect x="8" y="8" width="597" height="55" fill="none" stroke="#ff7850" stroke-width="2"/></svg>
<svg style="left:349px;top:468px;" width="20" height="20" viewBox="0 0 20 20"><path d="M9 2 V18 M1 10 H17" stroke="#d0d0d0" stroke-width="3.4"/><path d="M9 2.8 V17.2 M1.8 10 H16.2" stroke="#f78585" stroke-width="1.6"/></svg>
<svg style="left:346px;top:467px;" width="12" height="12" viewBox="0 0 12 12"><circle cx="6.5" cy="6" r="3.8" fill="#f78585" stroke="#fff" stroke-width="1"/></svg>
<svg style="left:346px;top:499px;" width="12" height="12" viewBox="0 0 12 12"><circle cx="6.5" cy="6" r="3.8" fill="#f78585" stroke="#fff" stroke-width="1"/></svg>
<svg style="left:346px;top:532px;" width="12" height="12" viewBox="0 0 12 12"><circle cx="6.5" cy="6" r="3.8" fill="#f78585" stroke="#fff" stroke-width="1"/></svg>
<svg style="left:650px;top:467px;" width="12" height="12" viewBox="0 0 12 12"><circle cx="6" cy="6" r="3.8" fill="#f78585" stroke="#fff" stroke-width="1"/></svg>
<svg style="left:650px;top:532px;" width="12" height="12" viewBox="0 0 12 12"><circle cx="6" cy="6" r="3.8" fill="#f78585" stroke="#fff" stroke-width="1"/></svg>
<svg style="left:953px;top:467px;" width="12" height="12" viewBox="0 0 12 12"><circle cx="6" cy="6" r="3.8" fill="#f78585" stroke="#fff" stroke-width="1"/></svg>
<svg style="left:953px;top:499px;" width="12" height="12" viewBox="0 0 12 12"><circle cx="6" cy="6" r="3.8" fill="#f78585" stroke="#fff" stroke-width="1"/></svg>
<svg style="left:953px;top:532px;" width="12" height="12" viewBox="0 0 12 12"><circle cx="6" cy="6" r="3.8" fill="#f78585" stroke="#fff" stroke-width="1"/></svg>
<div style="left:1025px;top:308px;width:6px;height:205px;background:#b0b0b0;border-radius:3px"></div>
<div style="left:514px;top:647px;width:267px;height:4px;background:#4a4a4a;border-radius:2px"></div>
<svg style="left:1056px;top:106px;" width="16" height="16" viewBox="0 0 16 16"><path d="M1 1 H8.6 V6.2 H13.2 V8.6 H10.3 V10.3 H8.6 V15 H1 Z" fill="#e0e0e0"/><path d="M9.6 1 L13.2 5.2 H9.6 Z" fill="#e0e0e0"/><path d="M11.3 9.2 V15 M8.4 12.1 H14.2" stroke="#8eef97" stroke-width="2"/></svg>
<svg style="left:1087px;top:107px;" width="16" height="15" viewBox="0 0 16 15"><path d="M1.6 14 V2.3 Q1.6 1 2.9 1 H5.8 L7.6 2.8 H11.2 V5" stroke="#e0e0e0" stroke-width="1.5" fill="none"/><path d="M4.8 5.4 H15.2 L13.6 14.2 H3 Z" fill="#e0e0e0"/></svg>
<svg style="left:1119px;top:106px;" width="16" height="16" viewBox="0 0 16 16"><path d="M1 2.5 Q1 1 2.5 1 H12.2 L15 3.8 V13.5 Q15 15 13.5 15 H2.5 Q1 15 1 13.5 Z" fill="#80848f"/><rect x="4" y="1" width="6.5" height="5.2" fill="#333b4f"/><rect x="4.8" y="1" width="1.6" height="4" fill="#80848f"/><circle cx="8" cy="10.8" r="1.9" fill="#333b4f"/></svg>
<svg style="left:1272px;top:106px;" width="10" height="16" viewBox="0 0 10 16"><path d="M7.5 1.5 L2.5 8 L7.5 14.5" stroke="#e0e0e0" stroke-width="2" fill="none"/></svg>
<svg style="left:1296px;top:106px;" width="10" height="16" viewBox="0 0 10 16"><path d="M2.5 1.5 L7.5 8 L2.5 14.5" stroke="#80848f" stroke-width="2" fill="none"/></svg>
<svg style="left:1321px;top:106px;" width="16" height="16" viewBox="0 0 16 16"><path d="M10 13.4 A5.3 5.3 0 1 0 4.8 6.9" stroke="#e0e0e0" stroke-width="2" fill="none"/><path d="M1.4 7.4 H7.8 L4.6 11.3 Z" fill="#e0e0e0"/><path d="M9.9 4.8 V8.4 H12.6" stroke="#e0e0e0" stroke-width="1.6" fill="none"/></svg>
<svg style="left:1054px;top:135px;" width="18" height="18" viewBox="0 0 18 18"><rect x="1" y="1" width="2" height="2" fill="#8eef97"/><rect x="15" y="1" width="2" height="2" fill="#8eef97"/><rect x="1" y="15" width="2" height="2" fill="#8eef97"/><rect x="15" y="15" width="2" height="2" fill="#8eef97"/><rect x="5" y="1" width="8" height="1.3" fill="#8eef97"/><rect x="5" y="15.7" width="8" height="1.3" fill="#8eef97"/><rect x="1" y="5" width="1.3" height="8" fill="#8eef97"/><rect x="15.7" y="5" width="1.3" height="8" fill="#8eef97"/><path d="M11.2 2.5 H13.8 V15.5 H11.2 Z" fill="#f0f0f0"/><path d="M5.5 3 L10.8 8.5 V15.5 H7.5 L6.5 14.2 L4.2 16.2 L3.5 15.5 L5.6 13.5 L3 12.8 V11 H5.5 Z" fill="#f0f0f0"/><path d="M6.5 6 L8.2 8 L6.5 9 Z" fill="#b8b8b8"/></svg>
<svg style="left:1322px;top:136px;" width="14" height="16" viewBox="0 0 14 16"><circle cx="3.6" cy="2" r="0.9" fill="#e0e0e0"/><rect x="2.9" y="2" width="1.4" height="6" fill="#e0e0e0"/><path d="M1.1 7.4 H6.1 V13.1 Q6.1 15.2 3.6 15.2 Q1.1 15.2 1.1 13.1 Z" fill="#e0e0e0"/><path d="M7.9 1.2 V3.5 Q7.9 6.4 10.3 6.4 Q12.7 6.4 12.7 3.5 V1.2" stroke="#e0e0e0" stroke-width="1.7" fill="none"/><path d="M10.3 6 V15.2" stroke="#e0e0e0" stroke-width="1.7"/></svg>
<svg style="left:1321px;top:167px;" width="16" height="16" viewBox="0 0 16 16"><circle cx="6" cy="6" r="4.2" stroke="#e0e0e0" stroke-width="2" fill="none"/><path d="M9.2 9.2 L13.3 13.3" stroke="#e0e0e0" stroke-width="2" stroke-linecap="round"/></svg>
<div style="left:1050px;top:192px;width:292px;height:503px;overflow:hidden">
<div style="left:285px;top:3px;width:4px;height:194px;background:#5f6472;border-radius:2px"></div>
<div style="left:3px;top:3px;width:274px;height:22px;background:#464c5b;"></div>
<svg style="left:81px;top:6px;" width="16" height="16" viewBox="0 0 16 16"><path d="M8 1 L14.5 4.5 V11.5 L8 15 L1.5 11.5 V4.5 Z" fill="#e0e0e0"/><path d="M4.5 6 L8 8 L8 12.5 L4.5 10.5 Z" fill="#464c5b"/><path d="M8 8 L11.5 6" stroke="#464c5b" stroke-width="1"/></svg>
<div class="t" style="left:102px;top:4px;font-size:14px;color:#d5d6d9;font-weight:normal;">Script Variables</div>
<div class="t" style="left:4px;top:26px;font-size:14px;color:#b6b7bb;font-weight:normal;">Dialog</div>
<svg style="left:263px;top:29px;" width="16" height="14" viewBox="0 0 16 14"><path d="M8.6 12 A5.2 5.2 0 1 0 2.9 6.4" stroke="#e0e0e0" stroke-width="2" fill="none"/><path d="M0 7.2 H6 L3 10.9 Z" fill="#e0e0e0"/></svg>
<div style="left:3px;top:48px;width:274px;height:106px;background:#232838;box-shadow: inset 0 0 0 1px #1f2331"></div>
<div style="left:244px;top:48px;width:33px;height:106px;background:#1e2230;"></div>
<div class="t" style="left:10px;top:50px;font-size:14px;color:#d5d6d9;font-weight:normal;">Hello, World!</div>
<div class="t" style="left:9px;top:72px;font-size:14px;color:#d5d6d9;font-weight:normal;letter-spacing:0.24px">And Hellooooooooooo Dolly~</div>
<svg style="left:256px;top:94px;" width="14" height="14" viewBox="0 0 14 14"><path d="M0 0 H4.6 L0 4.6 Z M14 0 V4.6 L9.4 0 Z M0 14 V9.4 L4.6 14 Z M14 14 H9.4 L14 9.4 Z" fill="#e0e0e0"/><path d="M1.5 1.5 L5.3 5.3 M12.5 1.5 L8.7 5.3 M1.5 12.5 L5.3 8.7 M12.5 12.5 L8.7 8.7" stroke="#e0e0e0" stroke-width="1.8"/></svg>
<div style="left:3px;top:159px;width:137px;height:26px;background:#515766;"></div>
<div class="t" style="left:4px;top:162px;font-size:14px;color:#b6b7bb;font-weight:normal;">Auto Advance</div>
<svg style="left:122px;top:165px;" width="16" height="14" viewBox="0 0 16 14"><path d="M8.6 12 A5.2 5.2 0 1 0 2.9 6.4" stroke="#e0e0e0" stroke-width="2" fill="none"/><path d="M0 7.2 H6 L3 10.9 Z" fill="#e0e0e0"/></svg>
<div style="left:140px;top:159px;width:137px;height:26px;background:#252a39;box-shadow: inset 0 0 0 1px #6a9ee8"></div>
<div style="left:145px;top:165px;width:14px;height:14px;background:#4a5060;border-radius:2px"></div>
<svg style="left:145px;top:165px;" width="14" height="14" viewBox="0 0 14 14"><path d="M3 7.5 L6 10.5 L11.5 4" stroke="#e8e8e8" stroke-width="2" fill="none"/></svg>
<div class="t" style="left:164px;top:162px;font-size:14px;color:#6a9ee8;font-weight:normal;">On</div>
<div class="t" style="left:4px;top:192px;font-size:14px;color:#b6b7bb;font-weight:normal;">Font</div>
<svg style="left:122px;top:195px;" width="16" height="14" viewBox="0 0 16 14"><path d="M8.6 12 A5.2 5.2 0 1 0 2.9 6.4" stroke="#e0e0e0" stroke-width="2" fill="none"/><path d="M0 7.2 H6 L3 10.9 Z" fill="#e0e0e0"/></svg>
<div style="left:140px;top:190px;width:104px;height:24px;background:#252a39;box-shadow: inset 0 0 0 1px #1e2230"></div>
<div style="left:244px;top:190px;width:5px;height:24px;background:#1f232e;"></div>
<div style="left:249px;top:190px;width:28px;height:24px;background:#252a39;box-shadow: inset 0 0 0 1px #1e2230"></div>
<div class="t" style="left:146px;top:192px;font-size:14px;color:#d5d6d9;font-weight:normal;letter-spacing:0.58px">res://Fonts/Te</div>
<svg style="left:256px;top:196px;" width="14" height="12" viewBox="0 0 14 12"><path d="M0 1 Q0 0 1 0 H5 L7 2 H13 Q14 2 14 3 V11 Q14 12 13 12 H1 Q0 12 0 11 Z" fill="#e0e0e0"/></svg>
<div class="t" style="left:4px;top:222px;font-size:14px;color:#b6b7bb;font-weight:normal;">Text Voice</div>
<svg style="left:122px;top:225px;" width="16" height="14" viewBox="0 0 16 14"><path d="M8.6 12 A5.2 5.2 0 1 0 2.9 6.4" stroke="#e0e0e0" stroke-width="2" fill="none"/><path d="M0 7.2 H6 L3 10.9 Z" fill="#e0e0e0"/></svg>
<div style="left:140px;top:220px;width:104px;height:24px;background:#252a39;box-shadow: inset 0 0 0 1px #1e2230"></div>
<div style="left:244px;top:220px;width:5px;height:24px;background:#1f232e;"></div>
<div style="left:249px;top:220px;width:28px;height:24px;background:#252a39;box-shadow: inset 0 0 0 1px #1e2230"></div>
<div class="t" style="left:146px;top:222px;font-size:14px;color:#d5d6d9;font-weight:normal;letter-spacing:0.25px">res://Sounds/s</div>
<svg style="left:256px;top:226px;" width="14" height="12" viewBox="0 0 14 12"><path d="M0 1 Q0 0 1 0 H5 L7 2 H13 Q14 2 14 3 V11 Q14 12 13 12 H1 Q0 12 0 11 Z" fill="#e0e0e0"/></svg>
<div class="t" style="left:4px;top:252px;font-size:14px;color:#b6b7bb;font-weight:normal;">Color</div>
<div style="left:140px;top:249px;width:137px;height:26px;background:#1f2330;"></div>
<div style="left:146px;top:253px;width:125px;height:18px;background:#ffffff;"></div>
<div class="t" style="left:4px;top:282px;font-size:14px;color:#b6b7bb;font-weight:normal;letter-spacing:0.2px">Text Speed</div>
<div style="left:140px;top:279px;width:137px;height:26px;background:#1e2230;"></div>
<div class="t" style="left:156px;top:282px;font-size:14px;color:#d5d6d9;font-weight:normal;">0.03</div>
<div style="left:3px;top:305px;width:274px;height:22px;background:#464c5b;"></div>
<svg style="left:82px;top:308px;" width="16" height="16" viewBox="0 0 16 16"><g fill="#8eef97"><rect x="1" y="1" width="2" height="2"/><rect x="13" y="1" width="2" height="2"/><rect x="1" y="13" width="2" height="2"/><rect x="13" y="13" width="2" height="2"/><rect x="4.5" y="1" width="7" height="2"/><rect x="4.5" y="13" width="7" height="2"/><rect x="1" y="4.5" width="1.6" height="7"/><rect x="13.4" y="4.5" width="1.6" height="7"/></g></svg>
<div class="t" style="left:103px;top:306px;font-size:14px;color:#d5d6d9;font-weight:normal;">ReferenceRect</div>
<div class="t" style="left:4px;top:330px;font-size:14px;color:#b6b7bb;font-weight:normal;">Border Color</div>
<div style="left:140px;top:328px;width:137px;height:24px;background:#1f2330;"></div>
<div style="left:146px;top:331px;width:125px;height:18px;background:#ff0000;"></div>
<div style="left:3px;top:353px;width:274px;height:22px;background:#464c5b;"></div>
<svg style="left:107px;top:358px;" width="13" height="13" viewBox="0 0 13 13"><circle cx="6.5" cy="6.5" r="5" stroke="#8eef97" stroke-width="2" fill="none"/></svg>
<div class="t" style="left:126px;top:354px;font-size:14px;color:#d5d6d9;font-weight:normal;">Control</div>
<div style="left:3px;top:375px;width:274px;height:22px;background:#383e4d;"></div>
<div class="t" style="left:7px;top:376px;font-size:14px;color:#d5d6d9;font-weight:normal;">Anchor</div>
<svg style="left:266px;top:382px;" width="10" height="7" viewBox="0 0 10 7"><path d="M1 6 L5 2 L9 6" stroke="#80848f" stroke-width="1.6" fill="none"/></svg>
<div class="t" style="left:12px;top:400px;font-size:14px;color:#b6b7bb;font-weight:normal;">Left</div>
<div style="left:144px;top:397px;width:133px;height:26px;background:#1e2230;"></div>
<div class="t" style="left:160px;top:400px;font-size:14px;color:#d5d6d9;font-weight:normal;">0</div>
<div style="left:150px;top:419.5px;width:121px;height:1.5px;background:#4a4f5b;"></div>
<div style="left:150px;top:419px;width:4px;height:2px;background:#e0e0e0;"></div>
<div class="t" style="left:12px;top:430px;font-size:14px;color:#b6b7bb;font-weight:normal;">Top</div>
<svg style="left:126px;top:434px;" width="16" height="14" viewBox="0 0 16 14"><path d="M8.6 12 A5.2 5.2 0 1 0 2.9 6.4" stroke="#e0e0e0" stroke-width="2" fill="none"/><path d="M0 7.2 H6 L3 10.9 Z" fill="#e0e0e0"/></svg>
<div style="left:144px;top:427px;width:133px;height:26px;background:#1e2230;"></div>
<div class="t" style="left:160px;top:430px;font-size:14px;color:#d5d6d9;font-weight:normal;">1</div>
<div style="left:150px;top:449.5px;width:121px;height:1.5px;background:#4a4f5b;"></div>
<div style="left:267px;top:449px;width:4px;height:2px;background:#e0e0e0;"></div>
<div class="t" style="left:12px;top:460px;font-size:14px;color:#b6b7bb;font-weight:normal;">Right</div>
<svg style="left:126px;top:464px;" width="16" height="14" viewBox="0 0 16 14"><path d="M8.6 12 A5.2 5.2 0 1 0 2.9 6.4" stroke="#e0e0e0" stroke-width="2" fill="none"/><path d="M0 7.2 H6 L3 10.9 Z" fill="#e0e0e0"/></svg>
<div style="left:144px;top:457px;width:133px;height:26px;background:#1e2230;"></div>
<div class="t" style="left:160px;top:460px;font-size:14px;color:#d5d6d9;font-weight:normal;">1</div>
<div style="left:150px;top:479.5px;width:121px;height:1.5px;background:#4a4f5b;"></div>
<div style="left:267px;top:479px;width:4px;height:2px;background:#e0e0e0;"></div>
<div class="t" style="left:12px;top:490px;font-size:14px;color:#b6b7bb;font-weight:normal;">Bottom</div>
<svg style="left:126px;top:494px;" width="16" height="14" viewBox="0 0 16 14"><path d="M8.6 12 A5.2 5.2 0 1 0 2.9 6.4" stroke="#e0e0e0" stroke-width="2" fill="none"/><path d="M0 7.2 H6 L3 10.9 Z" fill="#e0e0e0"/></svg>
<div style="left:144px;top:487px;width:133px;height:26px;background:#1e2230;"></div>
<div class="t" style="left:160px;top:490px;font-size:14px;color:#d5d6d9;font-weight:normal;">1</div>
<div style="left:150px;top:509.5px;width:121px;height:1.5px;background:#4a4f5b;"></div>
<div style="left:267px;top:509px;width:4px;height:2px;background:#e0e0e0;"></div>
</div>
</div></body></html>
